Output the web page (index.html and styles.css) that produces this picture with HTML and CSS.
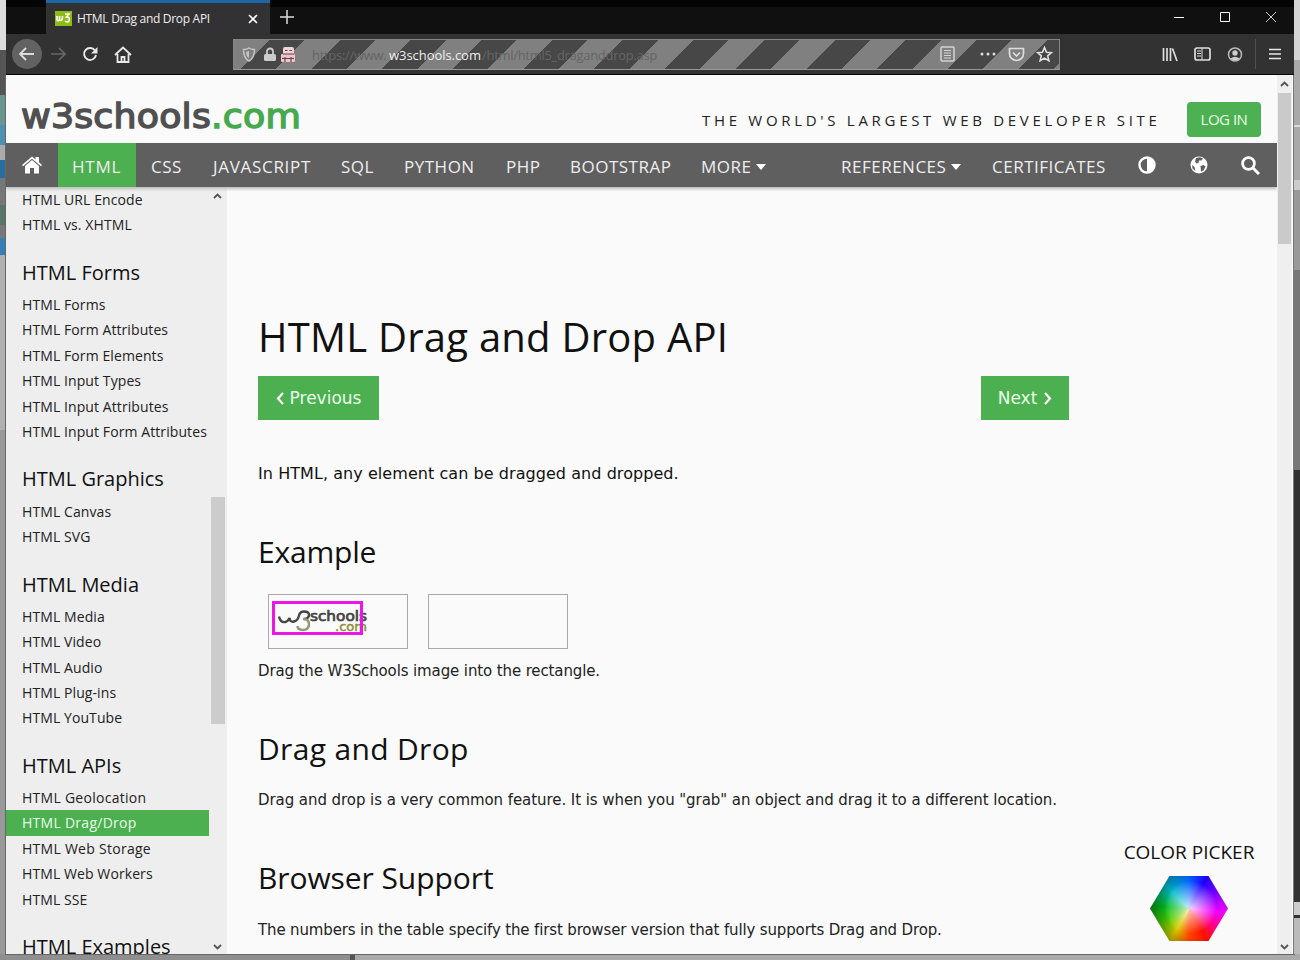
FILE: index.html
```html
<!DOCTYPE html>
<html lang="en">
<head>
<meta charset="utf-8">
<title>HTML Drag and Drop API</title>
<link rel="stylesheet" href="styles.css">
</head>
<body>
<div class="desktop">
<div class="window">
  <div class="titlebar">
    <div class="tab">
      <svg class="favicon" width="17" height="15" viewBox="0 0 17 15"><rect width="17" height="15" fill="#8ebc17"/><path d="M2 5v3q0 3 2.500 1V5v4q3 2 3-4M10 3h4l-2.500 3q4 0 2.500 4-1.500 2-4 0" fill="none" stroke="#fff" stroke-width="1.600"/></svg>
      <span class="tab-title">HTML Drag and Drop API</span>
      <svg class="tab-close" width="10" height="10" viewBox="0 0 10 10"><path d="M1 1l8 8M9 1l-8 8" stroke="#fff" stroke-width="1.700"/></svg>
    </div>
    <svg class="new-tab" width="14" height="14" viewBox="0 0 14 14"><path d="M7 0v14M0 7h14" stroke="#ddd" stroke-width="1.500"/></svg>
    <div class="win-controls">
      <svg width="12" height="12" viewBox="0 0 12 12"><path d="M1 6.500h10" stroke="#fff"/></svg>
      <svg width="12" height="12" viewBox="0 0 12 12"><path d="M1.500 1.500h9v9h-9z" fill="none" stroke="#fff"/></svg>
      <svg width="12" height="12" viewBox="0 0 12 12"><path d="M1 1l10 10M11 1L1 11" stroke="#ccc"/></svg>
    </div>
  </div>
  <div class="toolbar">
    <div class="nav-icons">
      <span class="back"><svg width="16" height="14" viewBox="0 0 16 14"><path d="M15 7H1M7 1L1 7l6 6" fill="none" stroke="#ddd" stroke-width="1.800"/></svg></span>
      <svg width="16" height="14" viewBox="0 0 16 14"><path d="M1 7h14M9 1l6 6-6 6" fill="none" stroke="#686868" stroke-width="1.600"/></svg>
      <svg width="16" height="16" viewBox="0 0 16 16"><path d="M13 4.500A6 6 0 1 0 14 9" fill="none" stroke="#e8e8e8" stroke-width="1.900"/><path d="M15.500 1v6.500H9z" fill="#e8e8e8"/></svg>
      <svg width="18" height="17" viewBox="0 0 18 17"><path d="M1 9l8-7.500L17 9M3.500 8v8h11V8M7.500 16v-5h3v5" fill="none" stroke="#e8e8e8" stroke-width="1.800"/></svg>
    </div>
    <div class="urlbar">
      <svg class="u-shield" width="14" height="15" viewBox="0 0 14 15"><path d="M1.500 2.500Q5 2.500 7 1q2 1.500 5.500 1.500 0 8.500-5.500 11.500-5.500-3-5.500-11.500z" fill="none" stroke="#c4c4c4" stroke-width="1.500"/><path d="M7 4v7Q4 9 4 5z" fill="#c4c4c4"/></svg>
      <svg class="u-lock" width="12" height="15" viewBox="0 0 12 15"><path d="M3 7V4.500a3 3 0 0 1 6 0V7" fill="none" stroke="#ccc" stroke-width="1.800"/><rect y="7" width="12" height="7" rx="1.500" fill="#ccc"/></svg>
      <svg class="u-cookie" width="16" height="17" viewBox="0 0 16 17"><rect x="3" y="1" width="11" height="9" rx="2" fill="#ecd5dc"/><rect x="1" y="8" width="14" height="8" rx="1" fill="#e8c6ce"/><path d="M5 4.500h2.500M9.500 4.500H12M3 8h11M5 11v5M11 11v5M2 12.500h12" stroke="#743746" stroke-width="1.100"/></svg>
      <span class="url"><i class="url-a">https://www.</i><b class="url-b">w3schools.com</b><i class="url-c">/html/html5_draganddrop.asp</i></span>
      <svg class="u-reader" width="15" height="16" viewBox="0 0 15 16"><rect x="1" y="1" width="13" height="14" rx="1" fill="none" stroke="#d4d4d4" stroke-width="1.500"/><path d="M4 4.500h7M4 7h7M4 9.500h7M4 12h7" stroke="#d4d4d4"/></svg>
      <svg class="u-dots" width="16" height="4" viewBox="0 0 16 4"><circle cx="2" cy="2" r="1.500" fill="#ddd"/><circle cx="8" cy="2" r="1.500" fill="#ddd"/><circle cx="14" cy="2" r="1.500" fill="#ddd"/></svg>
      <svg class="u-pocket" width="17" height="15" viewBox="0 0 17 15"><path d="M1.500 1.500h14v5a7 7 0 0 1-14 0z" fill="none" stroke="#ddd" stroke-width="1.700"/><path d="M5 5.500l3.500 3.500L12 5.500" fill="none" stroke="#ddd" stroke-width="1.700"/></svg>
      <svg class="u-star" width="17" height="16" viewBox="0 0 17 16"><path d="M8.500 1.500l2 4.700 5 .4-3.800 3.300 1.200 4.900-4.400-2.700-4.400 2.700 1.200-4.900L1.500 6.600l5-.4z" fill="none" stroke="#e0e0e0" stroke-width="1.600"/></svg>
    </div>
    <div class="tool-icons">
      <svg width="16" height="15" viewBox="0 0 16 15"><path d="M1.500 1v13M5 1v13M8.500 1v13M10.500 1.500l4.500 12.500" stroke="#ddd" stroke-width="1.700"/></svg>
      <svg width="17" height="14" viewBox="0 0 17 14"><rect x="1" y="1" width="15" height="12" rx="2" fill="none" stroke="#ddd" stroke-width="1.700"/><path d="M8 1v12M3 4h4M3 6.500h4M3 9h4" stroke="#ddd"/></svg>
      <svg width="16" height="15" viewBox="0 0 16 15"><circle cx="8" cy="7.500" r="6.500" fill="none" stroke="#bbb" stroke-width="1.500"/><circle cx="8" cy="6" r="2.700" fill="#ccc"/><path d="M3.500 11.500q4.500-3.500 9 0-4.500 4-9 0z" fill="#ccc"/></svg>
      <i class="divider"></i>
      <svg width="12" height="12" viewBox="0 0 12 12"><path d="M0 1.500h12M0 6h12M0 10.500h12" stroke="#e8e8e8" stroke-width="1.700"/></svg>
    </div>
  </div>
  <div class="viewport">
    <div class="page">
      <header class="site-header">
        <div class="logo">w3schools<span>.com</span></div>
        <div class="tagline">THE WORLD'S LARGEST WEB DEVELOPER SITE</div>
        <div class="login">LOG IN</div>
      </header>
      <nav class="topnav">
        <svg class="home" width="20" height="18" viewBox="0 0 20 18"><path d="M0 9L10 .5l3.500 3V1H17v5.300L20 9l-1 1.300-9-7.600-9 7.600z" fill="#fff"/><path d="M3 10l7-5.900L17 10v7.500h-5V12H8v5.500H3z" fill="#fff"/></svg>
        <span class="active">HTML</span><span class="n-css">CSS</span><span class="n-js">JAVASCRIPT</span><span class="n-sql">SQL</span><span class="n-py">PYTHON</span><span class="n-php">PHP</span><span class="n-boot">BOOTSTRAP</span><span class="n-more">MORE<i class="caret"></i></span>
        <span class="n-ref">REFERENCES<i class="caret"></i></span><span class="n-cert">CERTIFICATES</span>
        <svg class="n-contrast" width="18" height="18" viewBox="0 0 18 18"><circle cx="9" cy="9" r="7.500" fill="none" stroke="#fff" stroke-width="2.400"/><path d="M9 2v14a7 7 0 0 0 0-14z" fill="#fff"/></svg>
        <svg class="n-globe" width="18" height="18" viewBox="0 0 18 18"><circle cx="9" cy="9" r="8.500" fill="#fff"/><path d="M6 2l4-.8 3 1.300-1.500 2L9 4.500 8.500 7l-2 .5L5 5.500zM10.500 10l3-1 2 1.500-2 4-2.500 1zM2 9l2.500 2 1 4-3-2.500z" fill="#5f5f5f"/></svg>
        <svg class="n-search" width="19" height="19" viewBox="0 0 19 19"><circle cx="7.500" cy="7.500" r="5.900" fill="none" stroke="#fff" stroke-width="2.700"/><path d="M12 12l6 6" stroke="#fff" stroke-width="3"/></svg>
      </nav>
      <div class="columns">
        <aside class="sidebar">
          <div class="menu">
            <a>HTML URL Encode</a><a>HTML vs. XHTML</a>
            <h3>HTML Forms</h3>
            <a>HTML Forms</a><a>HTML Form Attributes</a><a>HTML Form Elements</a><a>HTML Input Types</a><a>HTML Input Attributes</a><a>HTML Input Form Attributes</a>
            <h3>HTML Graphics</h3>
            <a>HTML Canvas</a><a>HTML SVG</a>
            <h3>HTML Media</h3>
            <a>HTML Media</a><a>HTML Video</a><a>HTML Audio</a><a>HTML Plug-ins</a><a>HTML YouTube</a>
            <h3>HTML APIs</h3>
            <a class="wide">HTML Geolocation</a><a class="current wide">HTML Drag/Drop</a><a class="wide">HTML Web Storage</a><a>HTML Web Workers</a><a>HTML SSE</a>
            <h3>HTML Examples</h3>
          </div>
          <div class="side-scroll">
            <svg width="9" height="6" viewBox="0 0 9 6"><path d="M1 5l3.500-3.500L8 5" fill="none" stroke="#555" stroke-width="1.800"/></svg>
            <i class="side-thumb"></i>
            <svg width="9" height="6" viewBox="0 0 9 6"><path d="M1 1l3.500 3.500L8 1" fill="none" stroke="#555" stroke-width="1.800"/></svg>
          </div>
        </aside>
        <main class="content">
          <h1>HTML Drag and Drop API</h1>
          <div class="pager">
            <span class="btn prev"><svg width="8" height="13" viewBox="0 0 8 13"><path d="M7 1L2 6.500 7 12" fill="none" stroke="#fff" stroke-width="2.200"/></svg>Previous</span>
            <span class="btn next">Next<svg width="8" height="13" viewBox="0 0 8 13"><path d="M1 1l5 5.500L1 12" fill="none" stroke="#fff" stroke-width="2.200"/></svg></span>
          </div>
          <p class="intro">In HTML, any element can be dragged and dropped.</p>
          <h2 class="h-example">Example</h2>
          <div class="drop-row">
            <div class="drop">
              <svg class="drag-logo" width="97" height="36" viewBox="0 0 97 36"><path d="M7 15.500q1.500 6.500 6.500 5.500 3-1 4-4 .5 4.500 4.500 3.500 4-1 5-6 1-4 5-4 5 0 5 3.500 0 3.500-5 4" fill="none" stroke="#454545" stroke-width="2.400"/><path d="M31 18q6 0 6 5 0 6-6 6-5.500 0-5.500-4" fill="none" stroke="#8f9878" stroke-width="2.400"/><text x="38" y="19.500" class="dl-a" textLength="57" lengthAdjust="spacingAndGlyphs">schools</text><text x="63" y="30" class="dl-b" textLength="32" lengthAdjust="spacingAndGlyphs">.com</text><rect x="1.500" y="1.500" width="88" height="31" fill="none" stroke="#ee16e5" stroke-width="3"/></svg>
            </div>
            <div class="drop"></div>
          </div>
          <p class="p-drag">Drag the W3Schools image into the rectangle.</p>
          <h2 class="h-dnd">Drag and Drop</h2>
          <p class="p-common">Drag and drop is a very common feature. It is when you "grab" an object and drag it to a different location.</p>
          <h2 class="h-support">Browser Support</h2>
          <p class="p-numbers">The numbers in the table specify the first browser version that fully supports Drag and Drop.</p>
        </main>
        <div class="picker">
          <div class="picker-title">COLOR PICKER</div>
          <div class="hexagon"></div>
        </div>
      </div>
    </div>
    <div class="page-scroll">
      <svg width="9" height="6" viewBox="0 0 9 6"><path d="M1 5l3.500-3.500L8 5" fill="none" stroke="#555" stroke-width="1.800"/></svg>
      <i class="page-thumb"></i>
      <svg width="9" height="6" viewBox="0 0 9 6"><path d="M1 1l3.500 3.500L8 1" fill="none" stroke="#555" stroke-width="1.800"/></svg>
    </div>
  </div>
</div>
</div>
</body>
</html>
```
FILE: styles.css
```css
* { box-sizing: border-box; }
body { margin: 0; font-family: "Open Sans", "Noto Sans", sans-serif; color: #111; }
i, b { font-style: normal; font-weight: normal; }
svg { display: block; flex: none; }
span, a, h1, h2, h3, p, .tagline, .logo, .picker-title { white-space: nowrap; }

.desktop {
  width: 1300px; height: 960px; padding: 0 6px 6px; overflow: hidden;
  background:
    linear-gradient(#666, #666) 5px 75px / 1px 880px no-repeat,
    linear-gradient(#666, #666) 5px 954px / 1290px 1px no-repeat,
    linear-gradient(90deg, #8f8f8f 0 350px, #555 350px 355px, #aaa 355px) 0 954px / 1300px 6px no-repeat,
    linear-gradient(#d5d5d5 0 60px, #aaa 60px 125px, #ddd 125px 127px, #aaa 127px 180px, #ccc 180px 190px, #999 190px 270px, #777 270px 470px, #333 470px 902px, #ccc 902px 915px, #333 915px 918px, #bbb 918px) 1294px 0 / 6px 960px no-repeat,
    linear-gradient(#ddd 0 50px, #555 50px 95px, #6b968f 95px 125px, #4b91b2 125px 145px, #aaa 145px 160px, #276ea3 160px 178px, #777 178px 205px, #587568 205px 225px, #777 225px 238px, #347fb5 238px 255px, #b0b0b0 255px 430px, #999 430px) 0 0 / 6px 960px no-repeat;
}
.window { display: flex; flex-direction: column; width: 1288px; height: 954px; }

.titlebar { display: flex; align-items: center; height: 34px; background: linear-gradient(#050505 0 7px, #101010 7px); flex: none; }
.tab { display: flex; align-items: center; width: 224px; height: 34px; margin-left: 40px; padding: 0 12px 0 9px; background: #323234; border-top: 3px solid #1c67a8; }
.tab-title { margin-left: 5px; color: #eee; font-size: 12px; letter-spacing: -.3px; }
.tab-close { margin-left: auto; }
.new-tab { margin-left: 10px; }
.win-controls { display: flex; gap: 34px; margin-left: auto; margin-right: 17px; }

.toolbar { display: flex; align-items: center; height: 41px; background: #323232; border-bottom: 1px solid #050505; flex: none; }
.nav-icons { display: flex; align-items: center; gap: 16px; width: 227px; padding-left: 6px; }
.back { display: flex; align-items: center; justify-content: center; width: 30px; height: 30px; border-radius: 50%; background: #626262; }
.nav-icons .back + svg { margin-left: -8px; }
.urlbar {
  display: flex; align-items: center; width: 827px; height: 31px; padding: 0 6px 0 8px;
  border: 1px solid #858585; border-bottom-color: #999;
  background: repeating-linear-gradient(135deg, #808080 0 25px, #474747 25px 50px);
}
.u-lock { margin-left: 8px; }
.u-cookie { margin-left: 4px; }
.url { display: flex; margin-left: 16px; width: 350px; padding-top: 1px; font-size: 13px; }
.url-a { width: 77px; color: #656565; letter-spacing: -.3px; }
.url-b { width: 93px; color: #eee; letter-spacing: -.05px; }
.url-c { color: #656565; letter-spacing: -.3px; }
.u-reader { margin-left: auto; }
.u-dots { margin-left: 25px; }
.u-pocket { margin-left: 12px; }
.u-star { margin-left: 11px; }
.tool-icons { display: flex; align-items: center; gap: 16px; margin-left: auto; margin-right: 13px; }
.divider { width: 1px; height: 30px; background: #505050; margin: 0 -3px 0 -4px; }

.viewport { display: flex; height: 879px; background: #fafafa; border-right: 1px solid #777; }
.page { display: flex; flex-direction: column; width: 1271px; height: 879px; overflow: hidden; flex: none; }
.page-scroll { display: flex; flex-direction: column; align-items: center; width: 16px; padding: 6px 0 4px; background: #efefef; border-right: 1px solid #fff; }
.page-scroll svg:last-child { margin-top: auto; }
.page-thumb { width: 13px; height: 151px; margin-top: 6px; background: #cacaca; }

.site-header { display: flex; height: 68px; padding-left: 15px; flex: none; }
.logo { width: 681px; padding-top: 21px; font: 33px/42px "DejaVu Sans", sans-serif; color: #505050; letter-spacing: .2px; -webkit-text-stroke: 1.4px currentColor; transform: scaleX(1.1); transform-origin: 0 0; }
.logo span { color: #46a94e; }
.tagline { width: 485px; padding-top: 35px; font-size: 15px; line-height: 20px; letter-spacing: 3.7px; color: #222; }
.login { width: 74px; height: 35px; margin-top: 27px; border-radius: 4px; background: #4db052; color: #e8ffe8; font-size: 15px; line-height: 35px; text-align: center; letter-spacing: -.5px; }

.topnav { display: flex; align-items: center; height: 44px; background: #5f5f5f; color: #eee; font-size: 17px; letter-spacing: .5px; flex: none; box-shadow: 0 2px 3px #bbb; z-index: 1; position: relative; }
.topnav span { display: flex; align-items: center; height: 44px; padding-top: 3px; }
.home { margin: 0 16px 0 16px; }
.topnav .active { width: 78px; padding-left: 14px; background: #4caf50; letter-spacing: .8px; }
.n-css { width: 61px; padding-left: 15px; }
.topnav .n-js { width: 129px; padding-left: 16px; letter-spacing: .7px; }
.n-sql { width: 63px; padding-left: 15px; }
.n-py { width: 101px; padding-left: 15px; }
.n-php { width: 65px; padding-left: 16px; }
.n-boot { width: 131px; padding-left: 15px; }
.n-more { width: 140px; padding-left: 15px; }
.n-ref { width: 151px; padding-left: 15px; }
.n-cert { width: 161px; padding-left: 15px; }
.caret { border: 5px solid transparent; border-top: 6px solid #fff; border-bottom: 0; margin-left: 5px; }
.n-globe { margin-left: 34px; }
.n-search { margin-left: 33px; }
.n-contrast, .n-globe { margin-top: -1px; }

.columns { display: flex; height: 767px; position: relative; }
.sidebar { display: flex; width: 221px; background: #eee; overflow: hidden; flex: none; }
.menu { width: 203px; flex: none; }
.menu a { display: block; height: 25.4px; padding-left: 16px; font-size: 14px; line-height: 26.4px; letter-spacing: .09px; color: #222; }
.menu a.wide { letter-spacing: .27px; }
.menu .current { background: #4caf50; color: #eaffea; }
.menu h3 { height: 54.3px; margin: 0; padding: 16px 0 0 16px; font-size: 20px; font-weight: 400; line-height: 38.4px; letter-spacing: 0; }
.side-scroll { display: flex; flex-direction: column; align-items: center; width: 15px; margin-left: 1px; padding: 6px 0 4px; }
.side-thumb { width: 14px; height: 227px; margin-top: 298px; background: #ccc; }
.side-scroll svg:last-child { margin-top: auto; }

.content { width: 843px; padding: 120px 0 0 31px; }
h1, h2, p { margin: 0; font-weight: 400; }
h1 { font-size: 40px; line-height: 60px; letter-spacing: .24px; }
h2 { font-size: 30px; line-height: 40px; }
.pager { display: flex; justify-content: space-between; width: 811px; margin-top: 9px; }
.btn { display: flex; align-items: center; justify-content: center; height: 44px; background: #4caf50; color: #eaffea; font: 17px "DejaVu Sans", sans-serif; }
.prev { width: 121px; gap: 6px; }
.next { width: 88px; gap: 7px; }
p { font: 15px/24px "DejaVu Sans", sans-serif; color: #222; }
.intro { margin-top: 42px; font-size: 16px; letter-spacing: .06px; color: #111; }
.h-example { margin-top: 46px; letter-spacing: -.2px; }
.drop-row { display: flex; gap: 20px; margin: 22px 0 0 10px; }
.drop { width: 140px; height: 55px; padding: 6px 0 0 3px; border: 1px solid #aaa; }
.dl-a { font: 13.5px "DejaVu Sans", sans-serif; fill: #454545; stroke: #454545; stroke-width: .7px; }
.dl-b { font: 12px "DejaVu Sans", sans-serif; fill: #8b8b38; stroke: #8b8b38; stroke-width: .4px; }
.p-drag { margin-top: 10px; letter-spacing: -.12px; }
.h-dnd { margin-top: 46px; letter-spacing: .33px; }
.p-common { margin-top: 19px; letter-spacing: -.065px; }
.h-support { margin-top: 46px; letter-spacing: -.08px; }
.p-numbers { margin-top: 20px; letter-spacing: -.145px; }

.picker { width: 150px; margin-left: 44px; padding-top: 653px; }
.picker-title { font-size: 19px; line-height: 24px; text-align: center; }
.hexagon {
  width: 78px; height: 65px; margin: 12px auto 0;
  clip-path: polygon(25% 0, 75% 0, 100% 50%, 75% 100%, 25% 100%, 0 50%);
  background: radial-gradient(circle at 52% 48%, #fffc 0, #fff0 50%), radial-gradient(circle at 62% 50%, #0000 50%, #0008 95%), conic-gradient(#06f, #20f 30deg, #80f 65deg, #e0f 95deg, #f08 125deg, #f10 150deg, #f40 180deg, #dc0 210deg, #4c0 245deg, #0b2 275deg, #0bc 315deg, #06f);
}
```
